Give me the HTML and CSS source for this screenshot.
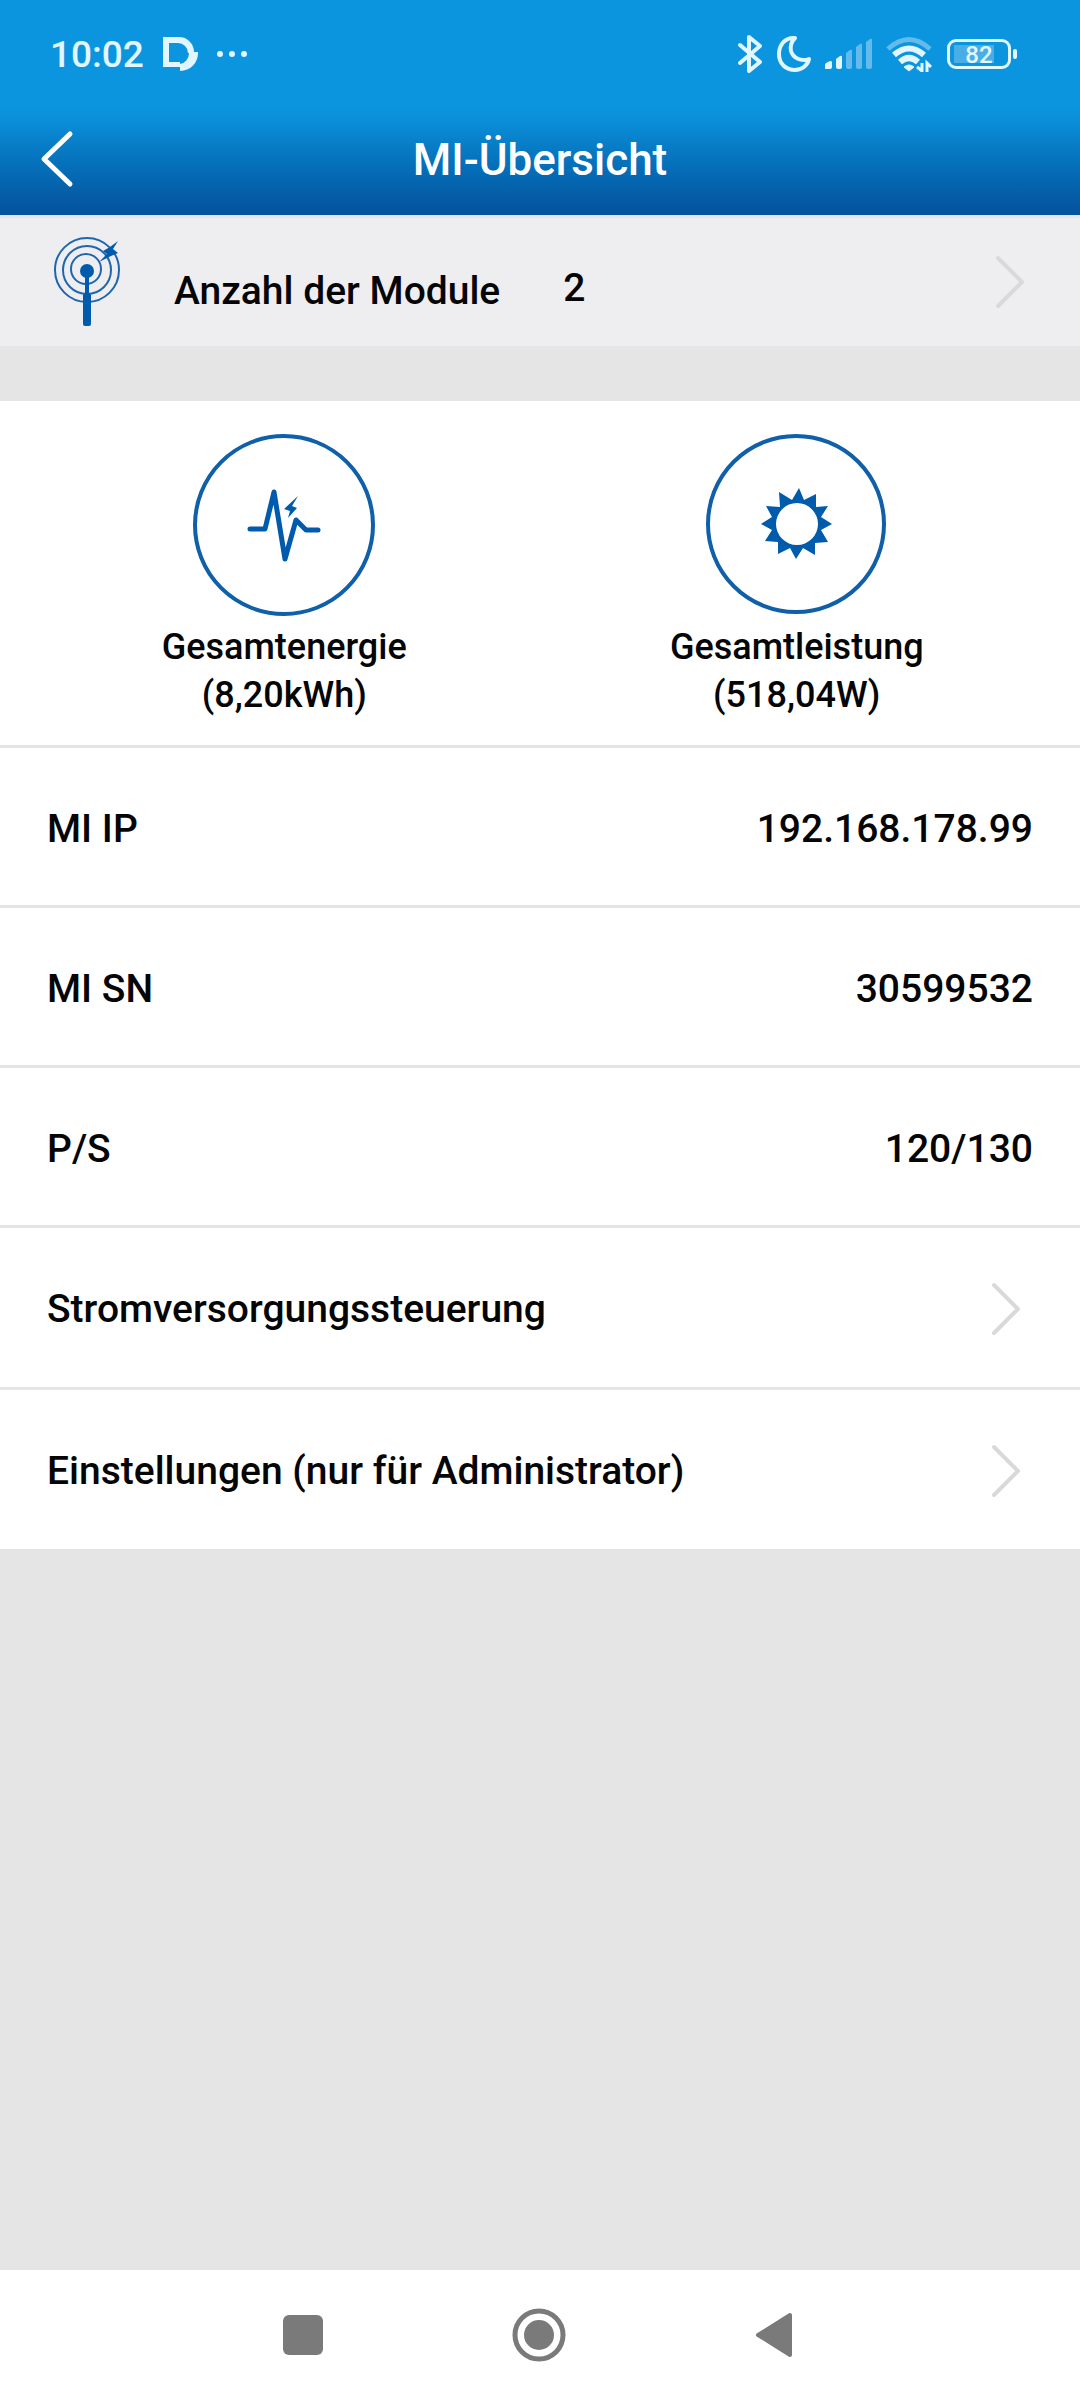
FILE: index.html
```html
<!DOCTYPE html>
<html lang="de">
<head>
<meta charset="utf-8">
<meta name="viewport" content="width=device-width, initial-scale=1">
<title>MI-Übersicht</title>
<link rel="stylesheet" href="styles.css">
</head>
<body>
<div class="app">
  <header class="header">
    <div class="status">
      <div class="status-group status-left">
        <span class="clock">10:02</span>
        <svg width="36" height="36" viewBox="0 0 36 36" aria-hidden="true">
          <path d="M1 1H17A15 15 0 0 1 32 16H36A18 18 0 0 1 18 35V31H1ZM7 7V26H18V28A11 11 0 0 0 27 17H26A10 10 0 0 0 16 7Z" fill="#e2f6ff" fill-rule="evenodd"/>
        </svg>
        <svg width="32" height="8" viewBox="0 0 32 8" aria-hidden="true">
          <g fill="#e2f6ff"><circle cx="4" cy="4" r="3"/><circle cx="16" cy="4" r="3"/><circle cx="28" cy="4" r="3"/></g>
        </svg>
      </div>
      <div class="status-group status-right">
        <svg width="26" height="40" viewBox="0 0 26 40" aria-hidden="true">
          <path d="M3 11L23 28L12 37V3L23 12L3 29" fill="none" stroke="#e2f6ff" stroke-width="4" stroke-linecap="round" stroke-linejoin="round"/>
        </svg>
        <svg width="36" height="38" viewBox="0 0 36 38" aria-hidden="true">
          <path d="M19 3C10 2 3 9 3 19C3 29 10 35 19 35C26 35 32 30 33 24C25 27 17 23 15 16C14 11 16 6 19 3Z" fill="none" stroke="#e2f6ff" stroke-width="4" stroke-linejoin="round"/>
        </svg>
        <svg width="48" height="32" viewBox="0 0 48 32" aria-hidden="true">
          <g fill="#e2f6ff"><path d="M0 31V27Q0 26 1 25L5 23Q7 23 7 24V29Q7 31 5 31Z"/><path d="M11 29V21L15 18Q17 17 17 19V29Q17 31 15 31H13Q11 31 11 29Z"/></g>
          <g fill="#63baeb"><path d="M21 29V15L25 12Q27 11 27 13V29Q27 31 25 31H23Q21 31 21 29Z"/><path d="M31 29V9L35 6Q37 5 37 7V29Q37 31 35 31H33Q31 31 31 29Z"/><path d="M41 29V4L45 1Q47 0 47 2V29Q47 31 45 31H43Q41 31 41 29Z"/></g>
        </svg>
        <svg width="48" height="36" viewBox="0 0 48 36" aria-hidden="true">
          <path d="M2 13Q23-6 44 13" fill="none" stroke="#63baeb" stroke-width="5"/>
          <path d="M8 19Q23 6 38 19M14 26Q23 18 32 26" fill="none" stroke="#e2f6ff" stroke-width="6"/>
          <path d="M18 31Q23 27 28 31L23 35Z" fill="#e2f6ff" stroke="#e2f6ff" stroke-width="1"/>
          <path d="M36 27V35L31 31M41 36V27L45 31" fill="none" stroke="#e2f6ff" stroke-width="3"/>
        </svg>
        <div class="battery"><span>82</span></div>
      </div>
    </div>
    <div class="titlebar">
      <button class="back" type="button" aria-label="Zurück">
        <svg width="34" height="58" viewBox="0 0 34 58" aria-hidden="true"><path d="M30 4L4 29L30 54" fill="none" stroke="#fff" stroke-width="5" stroke-linecap="round" stroke-linejoin="round"/></svg>
      </button>
      <h1 class="title">MI-Übersicht</h1>
    </div>
  </header>
  <main>
    <a class="modules" href="#module">
      <svg width="70" height="94" viewBox="0 0 70 94" aria-hidden="true">
        <g fill="none" stroke="#1f66ad" stroke-width="2">
          <circle cx="34" cy="35" r="32"/><circle cx="34" cy="35" r="24"/><circle cx="33" cy="34" r="15"/>
        </g>
        <circle cx="34" cy="36" r="7" fill="#005bac"/>
        <path d="M32 40H36V58L38 60V89Q38 91 36 91H32Q30 91 30 89V60L32 58Z" fill="#005bac"/>
        <path d="M65 6L60 14L65 18L58 21L46 27L54 19L50 16L57 12Z" fill="#005bac"/>
      </svg>
      <span class="modules-label">Anzahl der Module</span>
      <span class="modules-count">2</span>
      <svg class="chevron" width="30" height="54" viewBox="0 0 30 54" aria-hidden="true"><path d="M3 3L27 27L3 51"/></svg>
    </a>
    <section class="totals">
      <figure class="total">
        <svg width="182" height="182" viewBox="0 0 182 182" aria-hidden="true">
          <circle cx="91" cy="91" r="89" fill="none" stroke="#0f5fa9" stroke-width="4"/>
          <path d="M57 95H72L81 58L92 125L103 86L113 96H125" fill="none" stroke="#005bac" stroke-width="5" stroke-linecap="round" stroke-linejoin="round"/>
          <path d="M105 62L91 75L97 77L95 84L104 74L99 72Z" fill="#005bac"/>
        </svg>
        <figcaption>Gesamtenergie<br>(8,20kWh)</figcaption>
      </figure>
      <figure class="total">
        <svg width="182" height="182" viewBox="0 0 182 182" aria-hidden="true">
          <circle cx="90" cy="90" r="88" fill="none" stroke="#0f5fa9" stroke-width="4"/>
          <path transform="translate(-1 -1)" fill="#005bac" fill-rule="evenodd" d="M94 55L99 67L111 61V74L123 73L116 84L127 91L116 97L123 109L110 110V122L98 115L91 126L85 115L73 121V109L60 108L67 97L56 91L67 84L61 73L75 74L74 59L87 67ZM92 70A21 21 0 1 0 92 112A21 21 0 1 0 92 70Z"/>
        </svg>
        <figcaption>Gesamtleistung<br>(518,04W)</figcaption>
      </figure>
    </section>
    <dl class="list">
      <div class="row"><dt>MI IP</dt><dd>192.168.178.99</dd></div>
      <div class="row"><dt>MI SN</dt><dd>30599532</dd></div>
      <div class="row"><dt>P/S</dt><dd>120/130</dd></div>
    </dl>
    <nav class="list">
      <a class="row row-link" href="#strom">Stromversorgungssteuerung
        <svg class="chevron" width="30" height="54" viewBox="0 0 30 54" aria-hidden="true"><path d="M3 3L27 27L3 51"/></svg></a>
      <a class="row row-link" href="#einstellungen">Einstellungen (nur für Administrator)
        <svg class="chevron" width="30" height="54" viewBox="0 0 30 54" aria-hidden="true"><path d="M3 3L27 27L3 51"/></svg></a>
    </nav>
  </main>
  <footer class="sysnav">
    <button type="button" aria-label="Letzte Apps"><svg width="40" height="40" viewBox="0 0 40 40"><rect width="40" height="40" rx="6" fill="#7a7a7a"/></svg></button>
    <button type="button" aria-label="Startseite"><svg width="54" height="54" viewBox="0 0 54 54"><circle cx="27" cy="27" r="24" fill="none" stroke="#7a7a7a" stroke-width="5"/><circle cx="27" cy="27" r="15" fill="#7a7a7a"/></svg></button>
    <button type="button" aria-label="Zurück"><svg width="38" height="46" viewBox="0 0 38 46"><path d="M3 23L35 3V43Z" fill="#7a7a7a" stroke="#7a7a7a" stroke-width="4" stroke-linejoin="round"/></svg></button>
  </footer>
</div>
</body>
</html>
```
FILE: styles.css
```css
* { box-sizing: border-box; }
body {
  margin: 0;
  background: #e5e5e5;
  color: #050505;
  font-family: Roboto, "Liberation Sans", sans-serif;
  font-size: 39px;
  font-weight: 500;
  line-height: 48px;
}
svg { display: block; flex: none; }
button { padding: 0; border: 0; background: none; cursor: pointer; }
a { color: inherit; text-decoration: none; }

.app { display: flex; flex-direction: column; min-height: 100vh; }
main { flex: 1; }

.header {
  background: linear-gradient(#0c95df 0, #0c95df 105px, #0b8fd8 120px, #0675bf 157px, #0560aa 190px, #05529e 215px);
  color: #fff;
}
.status {
  display: flex;
  justify-content: space-between;
  align-items: center;
  height: 108px;
  padding: 0 63px 0 50px;
  color: #e2f6ff;
}
.status-group { display: flex; align-items: center; }
.status-left { gap: 18px; }
.clock { padding-top: 2px; font-size: 37px; }
.status-right { gap: 13px; }
.battery {
  position: relative;
  width: 64px;
  height: 30px;
  margin-right: 6px;
  border: 3px solid #e2f6ff;
  border-radius: 9px;
  background: linear-gradient(#49aee6, #49aee6) 4px 3px / 40px 18px no-repeat;
  font-size: 24px;
  line-height: 26px;
  text-align: center;
}
.battery::after {
  content: "";
  position: absolute;
  top: 7px;
  right: -9px;
  width: 4px;
  height: 10px;
  border-radius: 2px;
  background: #e2f6ff;
}
.titlebar {
  display: grid;
  grid-template-columns: 80px 1fr 80px;
  align-items: center;
  height: 107px;
  padding: 0 40px 6px;
}
.title { margin: 0; padding-top: 2px; font-size: 44px; font-weight: 500; text-align: center; }

.modules {
  display: flex;
  align-items: center;
  height: 131px;
  padding: 0 55px 0 53px;
  border-top: 3px solid #e4e6ec;
  background: #eeeef1;
}
.modules-label { margin-left: 51px; padding-top: 18px; }
.modules-count { margin-left: 63px; padding-top: 12px; }
.chevron { margin-left: auto; fill: none; stroke: #d9d9d9; stroke-width: 4; stroke-linecap: round; stroke-linejoin: round; }

.totals {
  display: flex;
  justify-content: space-around;
  margin-top: 55px;
  padding: 33px 27px 26px 28px;
  background: #fff;
}
.total {
  display: flex;
  flex-direction: column;
  align-items: center;
  gap: 7px;
  flex: 1;
  margin: 0;
  font-size: 36px;
  text-align: center;
}
.list { margin: 0; background: #fff; }
.row {
  display: flex;
  justify-content: space-between;
  align-items: center;
  height: 160px;
  padding: 5px 47px 0;
  border-top: 3px solid #e5e5e5;
}
.row-link { height: 162px; padding: 2px 59px 0 47px; }
dd { margin: 0; }

.sysnav {
  display: flex;
  justify-content: space-between;
  align-items: center;
  height: 130px;
  padding: 0 287px 0 283px;
  background: #fff;
}
```
